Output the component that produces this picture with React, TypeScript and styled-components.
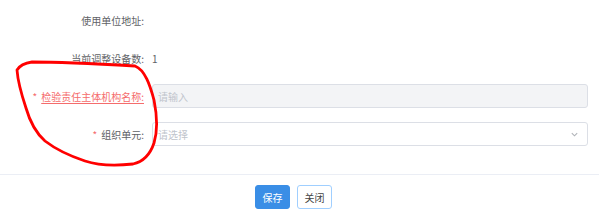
import { createGlobalStyle, styled } from "styled-components";

const GlobalStyle = createGlobalStyle`
  html, body {
    margin: 0;
    padding: 0;
    background: #fff;
    font-family: "Noto Sans CJK SC", "Noto Sans", sans-serif;
    font-size: 10px;
    color: #606266;
  }
`

const Page = styled.div`
  position: relative;
  width: 599px;
  height: 217px;
  overflow: hidden;
`

const Form = styled.div`
  display: flex;
  flex-direction: column;
  gap: 14px;
  padding: 8px 11px 0 0;
`

const Row = styled.div`
  display: grid;
  grid-template-columns: 144px 1fr;
  column-gap: 8px;
  align-items: center;
  height: 24px;
`

const Label = styled.label<{ $warn?: boolean }>`
  text-align: right;
  white-space: nowrap;
  color: ${p => (p.$warn ? "#f56c6c" : "#606266")};
  text-decoration: ${p => (p.$warn ? "underline" : "none")};
  text-underline-offset: 2px;
`

const Star = styled.span`
  color: #f56c6c;
  margin-right: 4px;
`

const Value = styled.span`
  color: #606266;
`

const Input = styled.div<{ $disabled?: boolean }>`
  box-sizing: border-box;
  height: 24px;
  border: 1px solid #dcdfe6;
  border-radius: 3px;
  background: ${p => (p.$disabled ? "#f3f4f6" : "#fff")};
  color: #c0c4cc;
  display: flex;
  align-items: center;
  justify-content: space-between;
  padding: 0 8px 0 5px;
`

const Footer = styled.div`
  position: absolute;
  left: 0;
  right: 0;
  bottom: 0;
  border-top: 1px solid #ebeef5;
  height: 43px;
  display: flex;
  justify-content: center;
  align-items: flex-start;
  padding: 10px 12px 0 0;
  box-sizing: border-box;
  gap: 7px;
`

const Button = styled.button<{ $primary?: boolean }>`
  width: 35px;
  height: 24px;
  padding: 0;
  font: inherit;
  font-size: 10px;
  border-radius: 3px;
  border: 1px solid ${p => (p.$primary ? "#3a8ee6" : "#a0cfff")};
  background: ${p => (p.$primary ? "#3a8ee6" : "#fff")};
  color: ${p => (p.$primary ? "#fff" : "#444")};
`

const Scribble = styled.svg`
  position: absolute;
  left: 0;
  top: 0;
  pointer-events: none;
`

const App = () => {
  return (
    <Page>
      <GlobalStyle />
      <Form>
        <Row>
          <Label>使用单位地址:</Label>
          <span />
        </Row>
        <Row>
          <Label>当前调整设备数:</Label>
          <Value>1</Value>
        </Row>
        <Row>
          <Label><Star>*</Star><Label as="span" $warn>检验责任主体机构名称:</Label></Label>
          <Input $disabled>请输入</Input>
        </Row>
        <Row>
          <Label><Star>*</Star>组织单元:</Label>
          <Input>
            请选择
            <svg width="9" height="9" viewBox="0 0 10 10">
              <path d="M2 3.5 L5 6.5 L8 3.5" fill="none" stroke="#b0b3b8" strokeWidth="1.2" />
            </svg>
          </Input>
        </Row>
      </Form>
      <Footer>
        <Button $primary>保存</Button>
        <Button>关闭</Button>
      </Footer>
      <Scribble width="599" height="217">
        <path
          d="M17 70 C20 65 25 63 32 62 C60 62 100 64 135 66 C145 70 150 85 154 100 C157 115 158 130 154 143 C150 155 142 162 133 164 C115 166 100 166 85 161 C70 156 58 151 45 141 C36 133 30 122 26 108 C22 96 18 84 17 70"
          fill="none"
          stroke="#f00"
          strokeWidth="2.8"
          strokeLinecap="round"
        />
      </Scribble>
    </Page>
  )
}

export default App
